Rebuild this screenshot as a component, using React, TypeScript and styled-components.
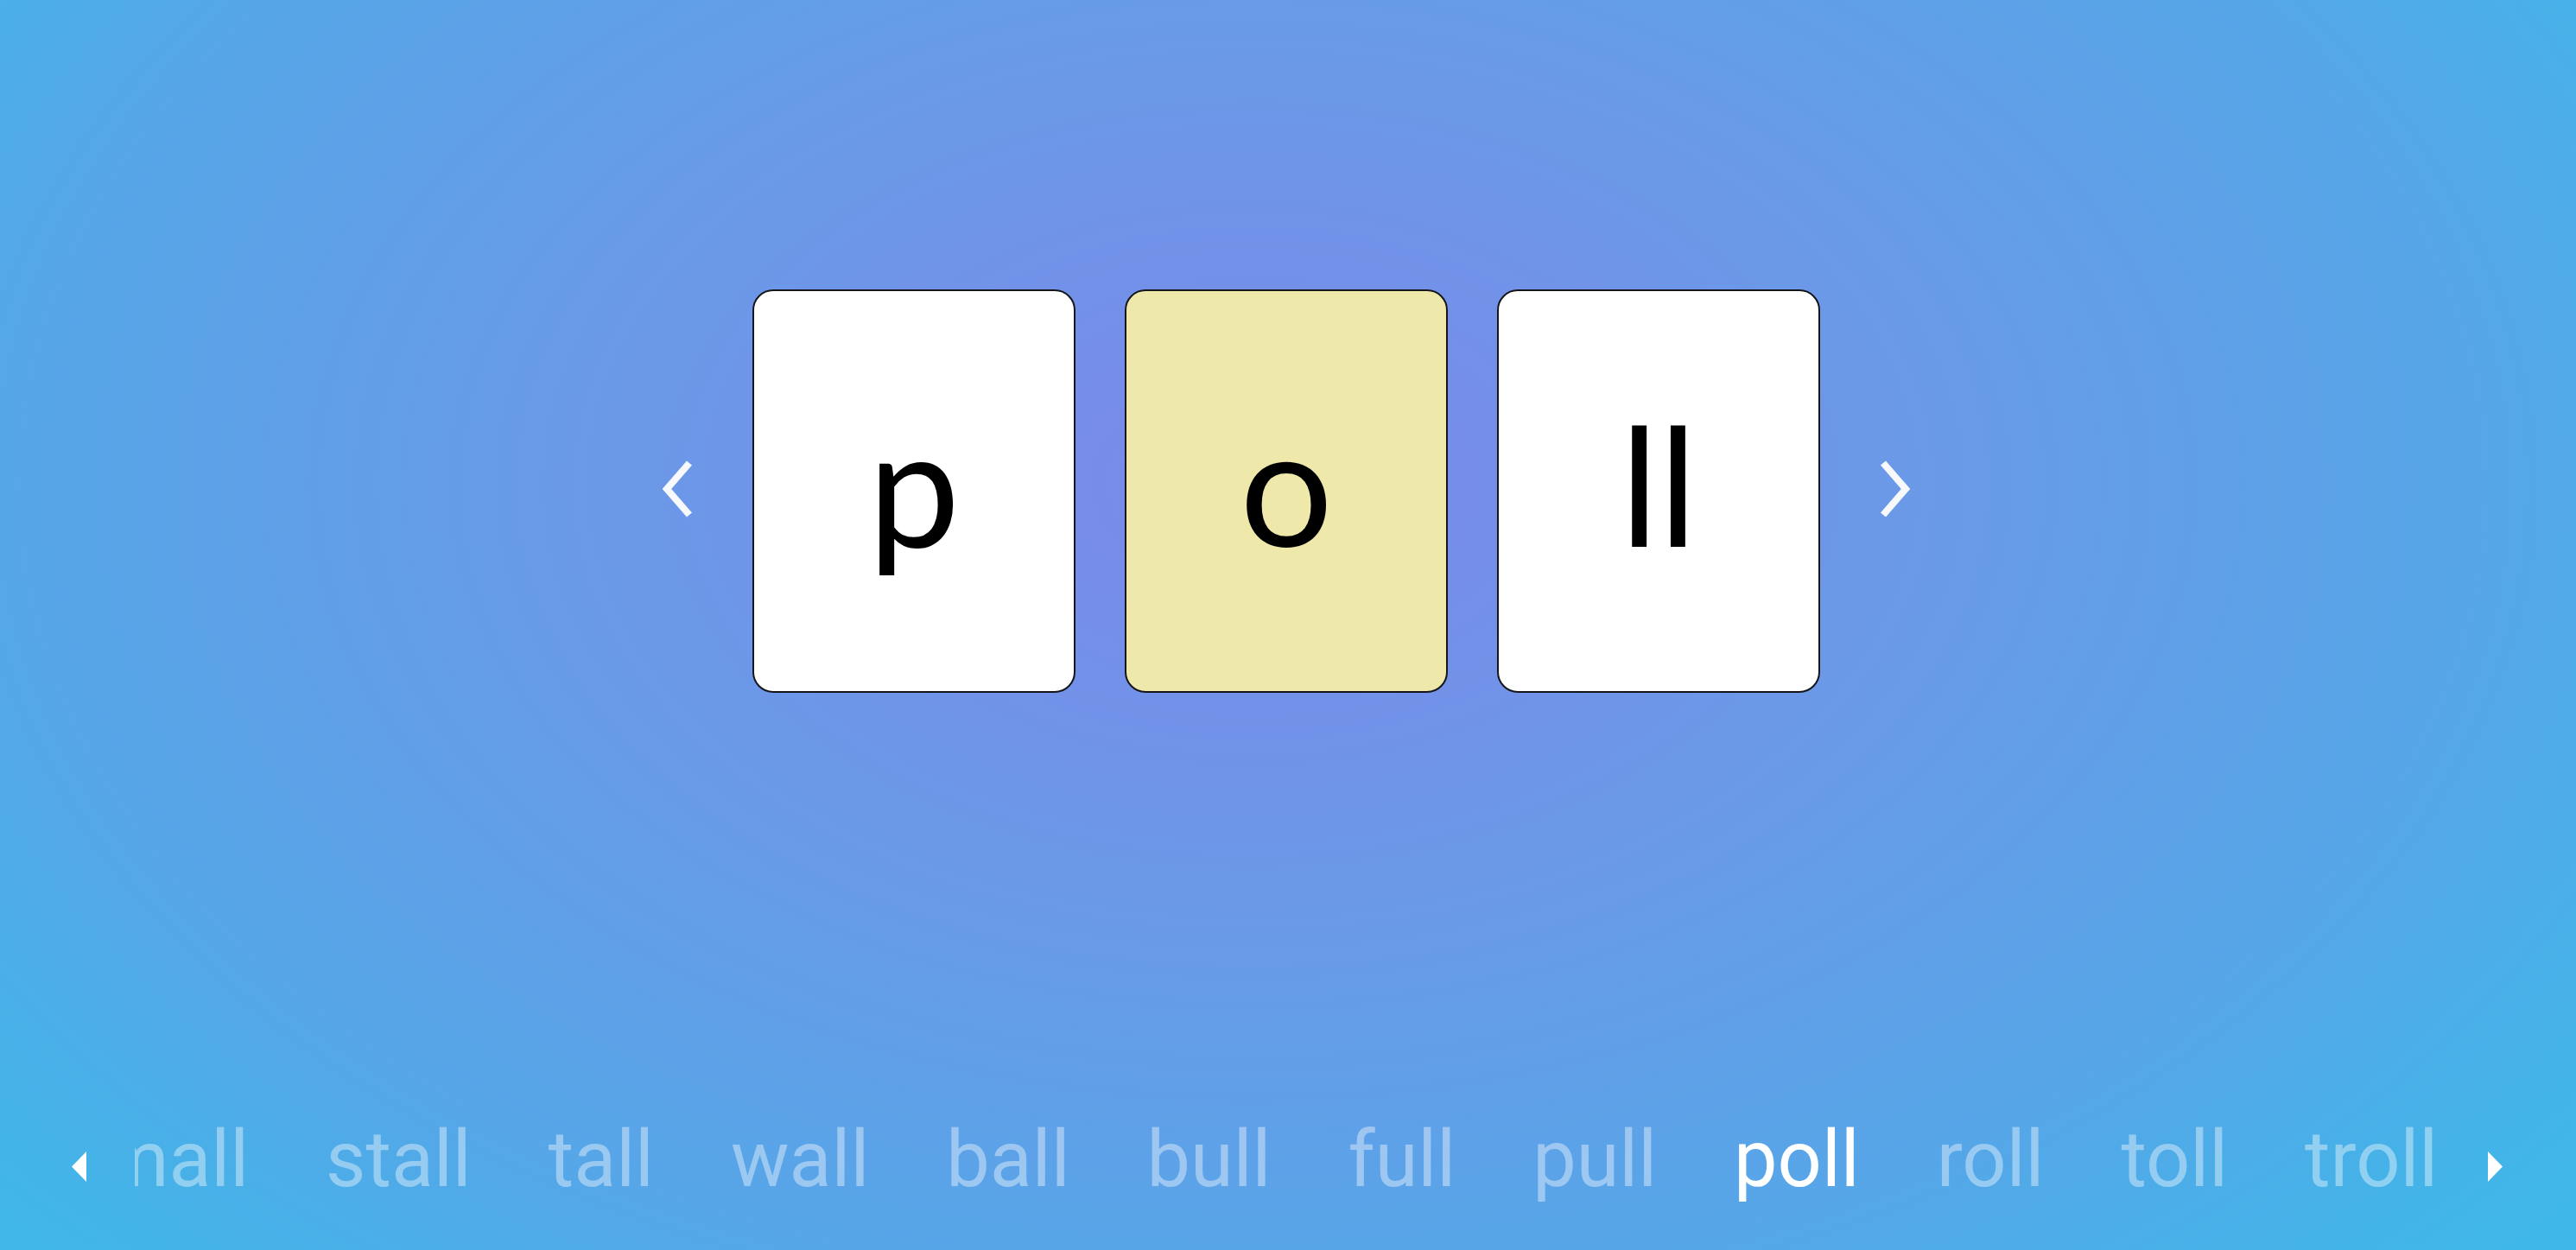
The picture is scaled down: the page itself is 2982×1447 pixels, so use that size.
import React from 'react';
import styled, {createGlobalStyle} from 'styled-components';

type Tile = {
    text: string
    active?: boolean
}

const tiles: Tile[] = [
    {text: 'p'},
    {text: 'o', active: true},
    {text: 'll'},
];

const words = ['small', 'stall', 'tall', 'wall', 'ball', 'bull', 'full', 'pull', 'poll', 'roll', 'toll', 'troll'];
const currentWord = 'poll';

const GlobalStyle = createGlobalStyle`
  html, body {
    margin: 0;
    padding: 0;
    height: 100%;
  }

  body {
    font-family: Roboto, "Liberation Sans", sans-serif;
    overflow: hidden;
  }
`;

const Chevron = ({direction}: { direction: 'left' | 'right' }) => (
    <ChevronButton aria-label={direction === 'left' ? 'previous' : 'next'}>
        <svg width="36" height="66" viewBox="0 0 36 66">
            <polyline
                points={direction === 'left' ? '32,3 6,33 32,63' : '4,3 30,33 4,63'}
                fill="none"
                stroke="#fff"
                strokeWidth="8"
                strokeLinejoin="miter"
            />
        </svg>
    </ChevronButton>
);

const Triangle = ({direction}: { direction: 'left' | 'right' }) => (
    <TriangleButton aria-label={direction === 'left' ? 'scroll left' : 'scroll right'}>
        <svg width="17" height="35" viewBox="0 0 17 35">
            <polygon points={direction === 'left' ? '17,0 0,17.5 17,35' : '0,0 17,17.5 0,35'} fill="#fff"/>
        </svg>
    </TriangleButton>
);

const App = () => {
    return (
        <Page>
            <GlobalStyle/>
            <Stage>
                <Chevron direction="left"/>
                <Tiles>
                    {tiles.map((tile, i) => (
                        <Card key={i} $active={tile.active}>
                            <Letter>{tile.text}</Letter>
                        </Card>
                    ))}
                </Tiles>
                <Chevron direction="right"/>
            </Stage>
            <WordBar>
                <Triangle direction="left"/>
                <WordViewport>
                    <WordTrack $offset={-86}>
                        {words.map((word) => (
                            <Word key={word} $current={word === currentWord}>{word}</Word>
                        ))}
                    </WordTrack>
                </WordViewport>
                <Triangle direction="right"/>
            </WordBar>
        </Page>
    );
};

const Page = styled.div`
  height: 100vh;
  display: flex;
  flex-direction: column;
  background: radial-gradient(
    ellipse 2600px 1700px at 1450px 560px,
    #7b88e9 0%,
    #6a9ae8 30%,
    #56a6e8 55%,
    #44b3e8 70%,
    #38bde9 88%
  );
`;

const Stage = styled.div`
  display: flex;
  justify-content: center;
  align-items: center;
  padding-top: 335px;
  padding-right: 4px;
`;

const ChevronButton = styled.button`
  border: none;
  background: none;
  padding: 0;
  display: flex;
  cursor: pointer;
  margin: 0 69px;
  margin-top: -6px;
  opacity: 0.95;
`;

const Tiles = styled.div`
  display: flex;
  gap: 57px;
`;

const Card = styled.div<{ $active?: boolean }>`
  box-sizing: border-box;
  width: 374px;
  height: 467px;
  border: 2px solid #16161a;
  border-radius: 24px;
  background: ${({$active}) => $active ? '#eee8aa' : '#ffffff'};
  display: flex;
  align-items: center;
  justify-content: center;
  padding-bottom: 20px;
`;

const Letter = styled.span`
  font-family: Lato, "Noto Sans", sans-serif;
  font-size: 190px;
  color: #000;
  line-height: 1.2;
`;

const WordBar = styled.div`
  margin-top: auto;
  display: flex;
  align-items: center;
  padding: 0 85px 52px 83px;
`;

const TriangleButton = styled.button`
  border: none;
  background: none;
  padding: 0;
  display: flex;
  cursor: pointer;
  margin-top: 16px;
`;

const WordViewport = styled.div`
  flex: 1;
  overflow: hidden;
  margin: 0 56px;
`;

const WordTrack = styled.div<{ $offset: number }>`
  display: flex;
  gap: 89px;
  white-space: nowrap;
  transform: translateX(${({$offset}) => $offset}px);
`;

const Word = styled.span<{ $current?: boolean }>`
  font-family: Roboto, "Liberation Sans", sans-serif;
  font-size: 90px;
  line-height: normal;
  color: ${({$current}) => $current ? '#ffffff' : 'rgba(255, 255, 255, 0.4)'};
`;

export default App;
